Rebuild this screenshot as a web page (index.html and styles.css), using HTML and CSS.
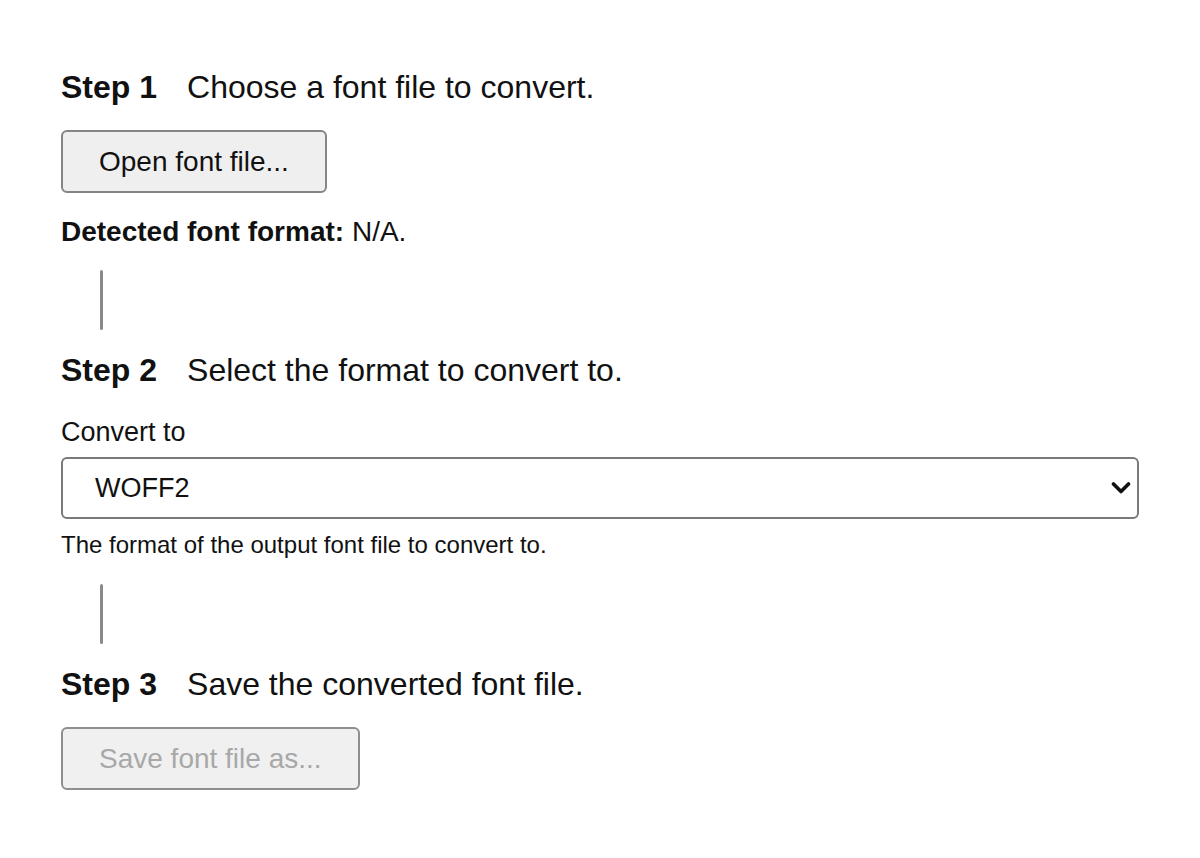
FILE: index.html
```html
<!DOCTYPE html>
<html lang="en">
<head>
<meta charset="utf-8">
<title>Font converter</title>
<link rel="stylesheet" href="styles.css">
</head>
<body>
<main class="page">
  <section class="step">
    <h2 class="step-title"><span class="step-num">Step 1</span><span class="step-text">Choose a font file to convert.</span></h2>
    <button class="btn" type="button">Open font file...</button>
    <p class="detected"><strong>Detected font format:</strong> N/A.</p>
  </section>
  <div class="connector connector-first"></div>
  <section class="step">
    <h2 class="step-title"><span class="step-num">Step 2</span><span class="step-text">Select the format to convert to.</span></h2>
    <label class="field-label" for="fmt">Convert to</label>
    <div class="select-wrap">
      <select id="fmt" class="select">
        <option>WOFF2</option>
        <option>WOFF</option>
        <option>TTF</option>
        <option>OTF</option>
      </select>
      <svg class="chevron" width="20" height="14" viewBox="0 0 20 14" aria-hidden="true"><path d="M2.5 3 L10 10.5 L17.5 3" fill="none" stroke="#111" stroke-width="3.6" stroke-linecap="round" stroke-linejoin="round"/></svg>
    </div>
    <p class="help">The format of the output font file to convert to.</p>
  </section>
  <div class="connector connector-second"></div>
  <section class="step">
    <h2 class="step-title"><span class="step-num">Step 3</span><span class="step-text">Save the converted font file.</span></h2>
    <button class="btn" type="button" disabled>Save font file as...</button>
  </section>
</main>
</body>
</html>
```
FILE: styles.css
```css
html, body {
  margin: 0;
  padding: 0;
  background: #ffffff;
}

body {
  font-family: "Liberation Sans", Arial, Helvetica, sans-serif;
  color: #111111;
}

.page {
  padding: 67px 61px 0 61px;
  display: flex;
  flex-direction: column;
}

.step {
  display: flex;
  flex-direction: column;
  align-items: flex-start;
}

.step-title {
  margin: 0;
  font-size: 32px;
  line-height: 40px;
  font-weight: normal;
  display: flex;
  gap: 30px;
}

.step-num {
  font-weight: bold;
}

.btn {
  margin-top: 23px;
  height: 63px;
  padding: 0 36px;
  font-family: inherit;
  font-size: 28px;
  color: #111111;
  background: #efefef;
  border: 2px solid #858585;
  border-radius: 6px;
}

.btn:disabled {
  color: #a8a8a8;
  background: #f0f0f0;
  border-color: #8e8e8e;
}

.detected {
  margin: 21px 0 0 0;
  font-size: 28px;
  line-height: 36px;
}

.connector {
  width: 3px;
  height: 60px;
  margin-left: 39px;
  background: #8a8a8a;
  border-radius: 2px;
}

.connector-first {
  margin-top: 20px;
  margin-bottom: 20px;
}

.connector-second {
  margin-top: 24px;
  margin-bottom: 20px;
}

.field-label {
  margin-top: 24px;
  font-size: 27px;
  line-height: 36px;
}

.select-wrap {
  position: relative;
  margin-top: 7px;
  align-self: stretch;
}

.select {
  display: block;
  width: 100%;
  height: 62px;
  padding: 0 60px 0 32px;
  font-family: inherit;
  font-size: 27px;
  color: #111111;
  background: #ffffff;
  border: 2px solid #7a7a7a;
  border-radius: 6px;
  appearance: none;
  -webkit-appearance: none;
}

.chevron {
  position: absolute;
  right: 8px;
  top: 24px;
  pointer-events: none;
}

.help {
  margin: 11px 0 0 0;
  font-size: 24px;
  line-height: 30px;
}
```
